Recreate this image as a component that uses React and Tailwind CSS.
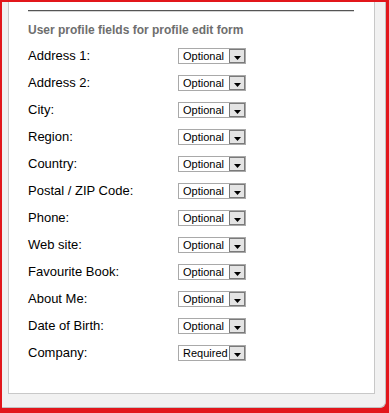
import React from "react";

const rows = [
  ["Address 1:", "Optional"],
  ["Address 2:", "Optional"],
  ["City:", "Optional"],
  ["Region:", "Optional"],
  ["Country:", "Optional"],
  ["Postal / ZIP Code:", "Optional"],
  ["Phone:", "Optional"],
  ["Web site:", "Optional"],
  ["Favourite Book:", "Optional"],
  ["About Me:", "Optional"],
  ["Date of Birth:", "Optional"],
  ["Company:", "Required"],
];

function Select({ value }) {
  return (
    <div className="w-[68px] h-[16px] border border-[#a9a9a9] bg-white flex items-center">
      <span className="pl-[4px] text-[11px] leading-[14px] text-black whitespace-nowrap">{value}</span>
      <div className="ml-auto w-[16px] h-[14px] border border-[#7a7a7a] bg-[#e4e4e4] flex items-center justify-center">
        <svg width="7" height="4" viewBox="0 0 7 4" className="mt-[3px]">
          <polygon points="0,0 7,0 3.5,4" fill="#000" />
        </svg>
      </div>
    </div>
  );
}

export default function App() {
  return (
    <div
      className="w-[389px] h-[413px] bg-[#e2161b] pt-[2px] pl-[2px] pr-[3px] pb-[5px]"
      style={{ fontFamily: '"Liberation Sans", Arial, sans-serif' }}
    >
      <div className="h-full bg-[#f1f1f1] border-r border-b border-[#c2c2c2] rounded-br-[6px] pl-[6px] pr-[10px] pb-[13px]">
        <div className="h-full bg-white border-l border-r border-b border-[#c8c8c8] pt-[8px] pl-[19px] pr-[20px]">
          <div className="h-[2px] border-t border-t-[#555555] border-b border-b-[#d4d4d4]" />
          <div className="mt-[11px] text-[12px] leading-[14px] font-bold text-[#6e6e6e] whitespace-nowrap">
            User profile fields for profile edit form
          </div>
          <div className="mt-[11px] flex flex-col gap-[11px]">
            {rows.map(([label, value]) => (
              <div key={label} className="flex items-center h-[16px]">
                <div className="w-[150px] text-[13px] leading-[16px] text-black whitespace-nowrap">{label}</div>
                <Select value={value} />
              </div>
            ))}
          </div>
        </div>
      </div>
    </div>
  );
}
